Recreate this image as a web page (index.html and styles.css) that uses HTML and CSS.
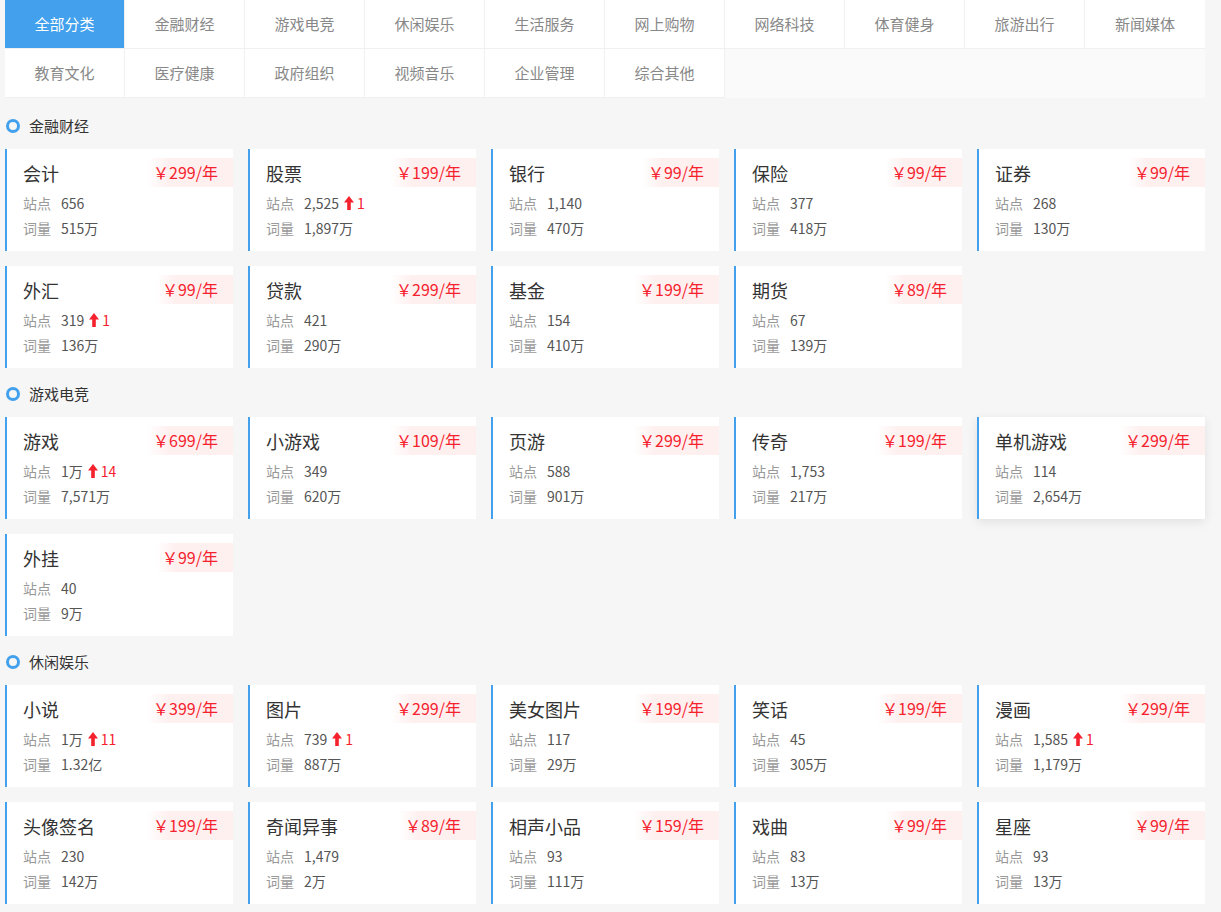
FILE: index.html
```html
<!DOCTYPE html>
<html lang="zh-CN">
<head>
  <meta charset="UTF-8">
  <title>词库分类</title>
  <link rel="stylesheet" href="styles.css">
</head>
<body>
  <div class="page">
    <div class="tabs">
      <div class="tab active">全部分类</div>
      <div class="tab">金融财经</div>
      <div class="tab">游戏电竞</div>
      <div class="tab">休闲娱乐</div>
      <div class="tab">生活服务</div>
      <div class="tab">网上购物</div>
      <div class="tab">网络科技</div>
      <div class="tab">体育健身</div>
      <div class="tab">旅游出行</div>
      <div class="tab">新闻媒体</div>
      <div class="tab">教育文化</div>
      <div class="tab">医疗健康</div>
      <div class="tab">政府组织</div>
      <div class="tab">视频音乐</div>
      <div class="tab">企业管理</div>
      <div class="tab">综合其他</div>
    </div>

    <!-- 金融财经 -->
    <div class="section">
      <div class="section-title"><i class="ring"></i>金融财经</div>
      <div class="cards">
        <div class="card">
          <div class="card-head"><span class="name">会计</span><span class="price">￥299/年</span></div>
          <div class="stat"><span class="label">站点</span><span class="val">656</span></div>
          <div class="stat"><span class="label">词量</span><span class="val">515万</span></div>
        </div>
        <div class="card">
          <div class="card-head"><span class="name">股票</span><span class="price">￥199/年</span></div>
          <div class="stat"><span class="label">站点</span><span class="val">2,525</span><span class="up"><svg viewBox="0 0 10 14"><path d="M5 0L10 6.5H6.8V14H3.2V6.5H0Z"/></svg>1</span></div>
          <div class="stat"><span class="label">词量</span><span class="val">1,897万</span></div>
        </div>
        <div class="card">
          <div class="card-head"><span class="name">银行</span><span class="price">￥99/年</span></div>
          <div class="stat"><span class="label">站点</span><span class="val">1,140</span></div>
          <div class="stat"><span class="label">词量</span><span class="val">470万</span></div>
        </div>
        <div class="card">
          <div class="card-head"><span class="name">保险</span><span class="price">￥99/年</span></div>
          <div class="stat"><span class="label">站点</span><span class="val">377</span></div>
          <div class="stat"><span class="label">词量</span><span class="val">418万</span></div>
        </div>
        <div class="card">
          <div class="card-head"><span class="name">证券</span><span class="price">￥99/年</span></div>
          <div class="stat"><span class="label">站点</span><span class="val">268</span></div>
          <div class="stat"><span class="label">词量</span><span class="val">130万</span></div>
        </div>
        <div class="card">
          <div class="card-head"><span class="name">外汇</span><span class="price">￥99/年</span></div>
          <div class="stat"><span class="label">站点</span><span class="val">319</span><span class="up"><svg viewBox="0 0 10 14"><path d="M5 0L10 6.5H6.8V14H3.2V6.5H0Z"/></svg>1</span></div>
          <div class="stat"><span class="label">词量</span><span class="val">136万</span></div>
        </div>
        <div class="card">
          <div class="card-head"><span class="name">贷款</span><span class="price">￥299/年</span></div>
          <div class="stat"><span class="label">站点</span><span class="val">421</span></div>
          <div class="stat"><span class="label">词量</span><span class="val">290万</span></div>
        </div>
        <div class="card">
          <div class="card-head"><span class="name">基金</span><span class="price">￥199/年</span></div>
          <div class="stat"><span class="label">站点</span><span class="val">154</span></div>
          <div class="stat"><span class="label">词量</span><span class="val">410万</span></div>
        </div>
        <div class="card">
          <div class="card-head"><span class="name">期货</span><span class="price">￥89/年</span></div>
          <div class="stat"><span class="label">站点</span><span class="val">67</span></div>
          <div class="stat"><span class="label">词量</span><span class="val">139万</span></div>
        </div>
      </div>
    </div>

    <!-- 游戏电竞 -->
    <div class="section">
      <div class="section-title"><i class="ring"></i>游戏电竞</div>
      <div class="cards">
        <div class="card">
          <div class="card-head"><span class="name">游戏</span><span class="price">￥699/年</span></div>
          <div class="stat"><span class="label">站点</span><span class="val">1万</span><span class="up"><svg viewBox="0 0 10 14"><path d="M5 0L10 6.5H6.8V14H3.2V6.5H0Z"/></svg>14</span></div>
          <div class="stat"><span class="label">词量</span><span class="val">7,571万</span></div>
        </div>
        <div class="card">
          <div class="card-head"><span class="name">小游戏</span><span class="price">￥109/年</span></div>
          <div class="stat"><span class="label">站点</span><span class="val">349</span></div>
          <div class="stat"><span class="label">词量</span><span class="val">620万</span></div>
        </div>
        <div class="card">
          <div class="card-head"><span class="name">页游</span><span class="price">￥299/年</span></div>
          <div class="stat"><span class="label">站点</span><span class="val">588</span></div>
          <div class="stat"><span class="label">词量</span><span class="val">901万</span></div>
        </div>
        <div class="card">
          <div class="card-head"><span class="name">传奇</span><span class="price">￥199/年</span></div>
          <div class="stat"><span class="label">站点</span><span class="val">1,753</span></div>
          <div class="stat"><span class="label">词量</span><span class="val">217万</span></div>
        </div>
        <div class="card hover">
          <div class="card-head"><span class="name">单机游戏</span><span class="price">￥299/年</span></div>
          <div class="stat"><span class="label">站点</span><span class="val">114</span></div>
          <div class="stat"><span class="label">词量</span><span class="val">2,654万</span></div>
        </div>
        <div class="card">
          <div class="card-head"><span class="name">外挂</span><span class="price">￥99/年</span></div>
          <div class="stat"><span class="label">站点</span><span class="val">40</span></div>
          <div class="stat"><span class="label">词量</span><span class="val">9万</span></div>
        </div>
      </div>
    </div>

    <!-- 休闲娱乐 -->
    <div class="section">
      <div class="section-title"><i class="ring"></i>休闲娱乐</div>
      <div class="cards">
        <div class="card">
          <div class="card-head"><span class="name">小说</span><span class="price">￥399/年</span></div>
          <div class="stat"><span class="label">站点</span><span class="val">1万</span><span class="up"><svg viewBox="0 0 10 14"><path d="M5 0L10 6.5H6.8V14H3.2V6.5H0Z"/></svg>11</span></div>
          <div class="stat"><span class="label">词量</span><span class="val">1.32亿</span></div>
        </div>
        <div class="card">
          <div class="card-head"><span class="name">图片</span><span class="price">￥299/年</span></div>
          <div class="stat"><span class="label">站点</span><span class="val">739</span><span class="up"><svg viewBox="0 0 10 14"><path d="M5 0L10 6.5H6.8V14H3.2V6.5H0Z"/></svg>1</span></div>
          <div class="stat"><span class="label">词量</span><span class="val">887万</span></div>
        </div>
        <div class="card">
          <div class="card-head"><span class="name">美女图片</span><span class="price">￥199/年</span></div>
          <div class="stat"><span class="label">站点</span><span class="val">117</span></div>
          <div class="stat"><span class="label">词量</span><span class="val">29万</span></div>
        </div>
        <div class="card">
          <div class="card-head"><span class="name">笑话</span><span class="price">￥199/年</span></div>
          <div class="stat"><span class="label">站点</span><span class="val">45</span></div>
          <div class="stat"><span class="label">词量</span><span class="val">305万</span></div>
        </div>
        <div class="card">
          <div class="card-head"><span class="name">漫画</span><span class="price">￥299/年</span></div>
          <div class="stat"><span class="label">站点</span><span class="val">1,585</span><span class="up"><svg viewBox="0 0 10 14"><path d="M5 0L10 6.5H6.8V14H3.2V6.5H0Z"/></svg>1</span></div>
          <div class="stat"><span class="label">词量</span><span class="val">1,179万</span></div>
        </div>
        <div class="card">
          <div class="card-head"><span class="name">头像签名</span><span class="price">￥199/年</span></div>
          <div class="stat"><span class="label">站点</span><span class="val">230</span></div>
          <div class="stat"><span class="label">词量</span><span class="val">142万</span></div>
        </div>
        <div class="card">
          <div class="card-head"><span class="name">奇闻异事</span><span class="price">￥89/年</span></div>
          <div class="stat"><span class="label">站点</span><span class="val">1,479</span></div>
          <div class="stat"><span class="label">词量</span><span class="val">2万</span></div>
        </div>
        <div class="card">
          <div class="card-head"><span class="name">相声小品</span><span class="price">￥159/年</span></div>
          <div class="stat"><span class="label">站点</span><span class="val">93</span></div>
          <div class="stat"><span class="label">词量</span><span class="val">111万</span></div>
        </div>
        <div class="card">
          <div class="card-head"><span class="name">戏曲</span><span class="price">￥99/年</span></div>
          <div class="stat"><span class="label">站点</span><span class="val">83</span></div>
          <div class="stat"><span class="label">词量</span><span class="val">13万</span></div>
        </div>
        <div class="card">
          <div class="card-head"><span class="name">星座</span><span class="price">￥99/年</span></div>
          <div class="stat"><span class="label">站点</span><span class="val">93</span></div>
          <div class="stat"><span class="label">词量</span><span class="val">13万</span></div>
        </div>
      </div>
    </div>
  </div>
</body>
</html>
```

FILE: styles.css
```css
body {
  margin: 0;
  background-color: #f6f6f6;
  font-family: "Noto Sans CJK SC", "Noto Sans", sans-serif;
  color: #333;
}

.page {
  width: 1200px;
  padding-left: 5px;
}

.tabs {
  display: grid;
  grid-template-columns: repeat(10, 120px);
  background-color: #fafafa;
  margin-bottom: 17px;
}

.tab {
  height: 48px;
  line-height: 48px;
  text-align: center;
  font-size: 15px;
  color: #888;
  background-color: #fff;
  border-right: 1px solid #f0f0f0;
  border-bottom: 1px solid #f0f0f0;
}

.tab:nth-child(10n) {
  border-right: none;
}

.tab.active {
  background-color: #42a0ec;
  color: #fff;
}

.section-title {
  display: flex;
  align-items: center;
  height: 24px;
  box-sizing: border-box;
  padding-bottom: 3px;
  font-size: 15px;
  color: #333;
  margin-bottom: 10px;
}

.ring {
  display: inline-block;
  width: 8px;
  height: 8px;
  border: 3px solid #42a0ec;
  border-radius: 50%;
  margin: 0 9px 0 1px;
}

.cards {
  display: grid;
  grid-template-columns: repeat(5, 228px);
  column-gap: 15px;
}

.card {
  height: 102px;
  background-color: #fff;
  border-left: 2px solid #42a0ec;
  box-sizing: border-box;
  padding: 9px 0 0 16px;
  margin-bottom: 15px;
}

.card.hover {
  box-shadow: 0 3px 10px rgba(0,0,0,0.09);
}

.card-head {
  display: flex;
  justify-content: space-between;
  align-items: center;
  height: 29px;
  margin-bottom: 3px;
}

.name {
  font-size: 18px;
  color: #333;
  padding-top: 1px;
}

.price {
  height: 29px;
  line-height: 29px;
  padding: 0 15px 0 6px;
  font-size: 16px;
  color: #f5222d;
  background: linear-gradient(to right, rgba(255,240,240,0), #fff0f0 25%);
}

.stat {
  display: flex;
  align-items: center;
  height: 25px;
  font-size: 14px;
}

.label {
  color: #999;
  width: 38px;
}

.val {
  color: #555;
}

.up {
  display: inline-flex;
  align-items: center;
  color: #f5222d;
  margin-left: 5px;
}

.up svg {
  width: 10px;
  height: 14px;
  fill: #f5222d;
  margin-right: 3px;
}
```
